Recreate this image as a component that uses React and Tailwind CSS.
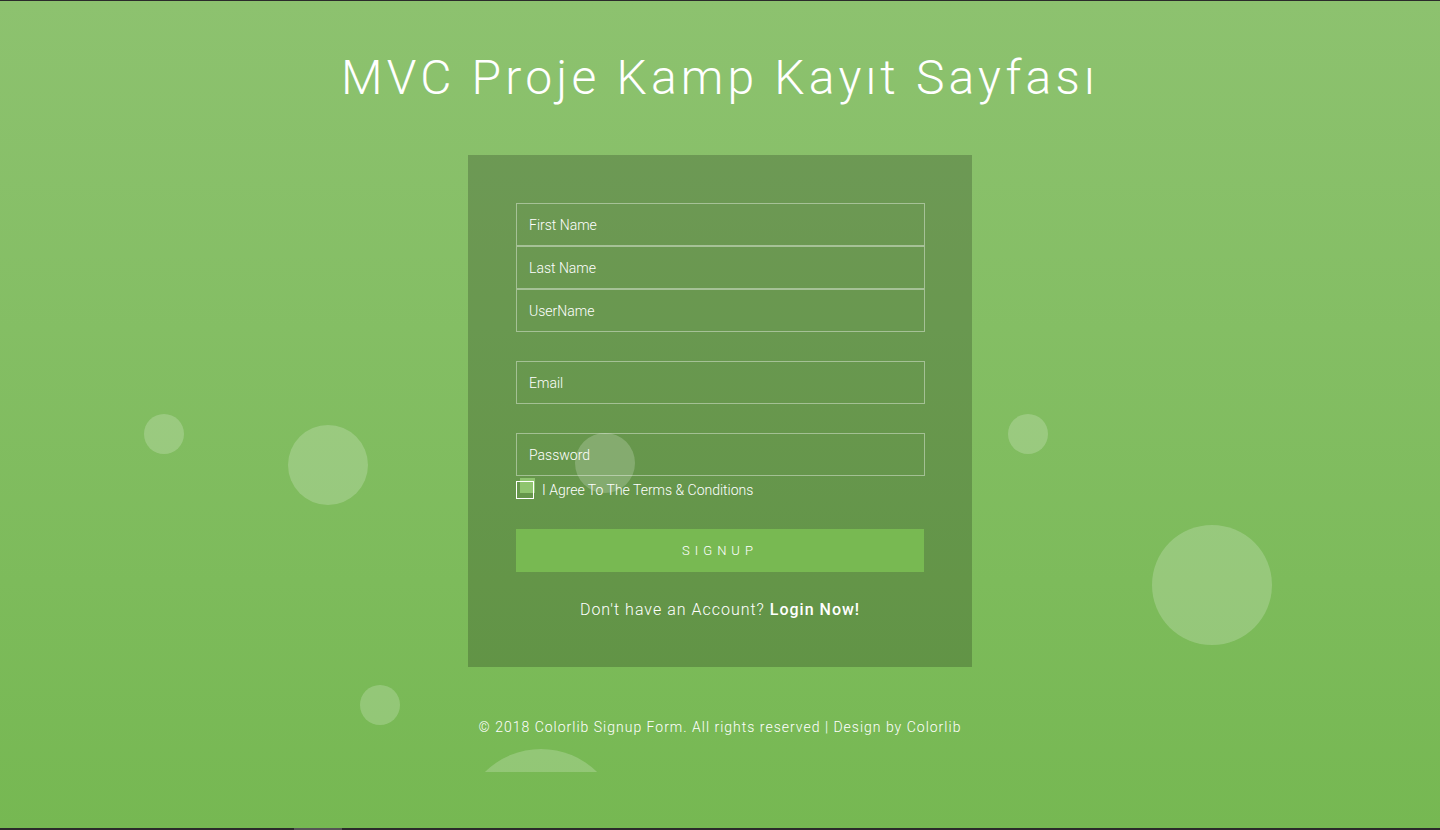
import React from "react";

const bubbles = [
  { cls: "left-[144px] top-[413px] w-[40px] h-[40px]" },
  { cls: "left-[288px] top-[424px] w-[80px] h-[80px]" },
  { cls: "left-[575px] top-[432px] w-[60px] h-[60px]" },
  { cls: "left-[1008px] top-[413px] w-[40px] h-[40px]" },
  { cls: "left-[1152px] top-[524px] w-[120px] h-[120px]" },
  { cls: "left-[360px] top-[684px] w-[40px] h-[40px]" },
  { cls: "left-[461px] top-[748px] w-[160px] h-[160px]" },
];

const inputCls =
  "h-[43px] w-[409px] border border-white/40 bg-transparent px-[12px] text-[14px] font-light text-white placeholder:text-white outline-none";

export default function App() {
  return (
    <div
      className="relative w-[1440px] h-[830px] overflow-hidden bg-[#2b2b2b]"
      style={{ fontFamily: "Roboto, 'Liberation Sans', sans-serif" }}
    >
      <div className="absolute left-0 top-[1px] w-[1440px] h-[827px] bg-gradient-to-b from-[#8dc26f] to-[#76b852]">
        {/* bubbles layer */}
        <div className="absolute left-0 top-0 w-full h-[771px] overflow-hidden pointer-events-none z-10">
          {bubbles.map((b, i) => (
            <div key={i} className={`absolute rounded-full bg-white/20 ${b.cls}`} />
          ))}
        </div>

        <div className="relative flex flex-col items-center">
          <h1 className="mt-[46px] h-[62px] text-[48px] leading-[62px] font-light tracking-[4.2px] text-white">
            MVC Proje Kamp Kayıt Sayfası
          </h1>

          <div className="mt-[46px] w-[504px] h-[512px] bg-black/20 pt-[48px] pl-[48px] flex flex-col">
            <div className="flex flex-col w-[409px]">
              {["First Name", "Last Name", "UserName"].map((p) => (
                <input key={p} placeholder={p} className={inputCls} />
              ))}
            </div>
            <input placeholder="Email" className={`mt-[29px] ${inputCls}`} />
            <input placeholder="Password" type="password" className={`mt-[29px] ${inputCls}`} />
            <div className="mt-[5px] flex items-center h-[18px]">
              <div className="relative w-[18px] h-[18px]">
                <div className="absolute left-[4px] top-[-3px] w-[15px] h-[15px] bg-[#8fc46f]" />
                <div className="absolute left-0 top-0 w-[18px] h-[18px] border-[1.5px] border-white" />
              </div>
              <span className="ml-[8px] text-[14px] font-light text-white leading-[18px]">
                I Agree To The Terms &amp; Conditions
              </span>
            </div>
            <button className="mt-[30px] h-[43px] w-[408px] bg-[#78b952] text-white text-[13px] tracking-[5px] font-light">
              SIGNUP
            </button>
            <p className="mt-[26px] w-[408px] text-center text-[16px] font-light tracking-[1px] text-white">
              Don't have an Account? <span className="font-medium">Login Now!</span>
            </p>
          </div>

          <p className="mt-[50px] text-[14px] font-light tracking-[1px] text-white">
            © 2018 Colorlib Signup Form. All rights reserved | Design by Colorlib
          </p>
        </div>
      </div>
      <div className="absolute left-[294px] bottom-0 w-[48px] h-[2px] bg-[#555]" />
    </div>
  );
}
